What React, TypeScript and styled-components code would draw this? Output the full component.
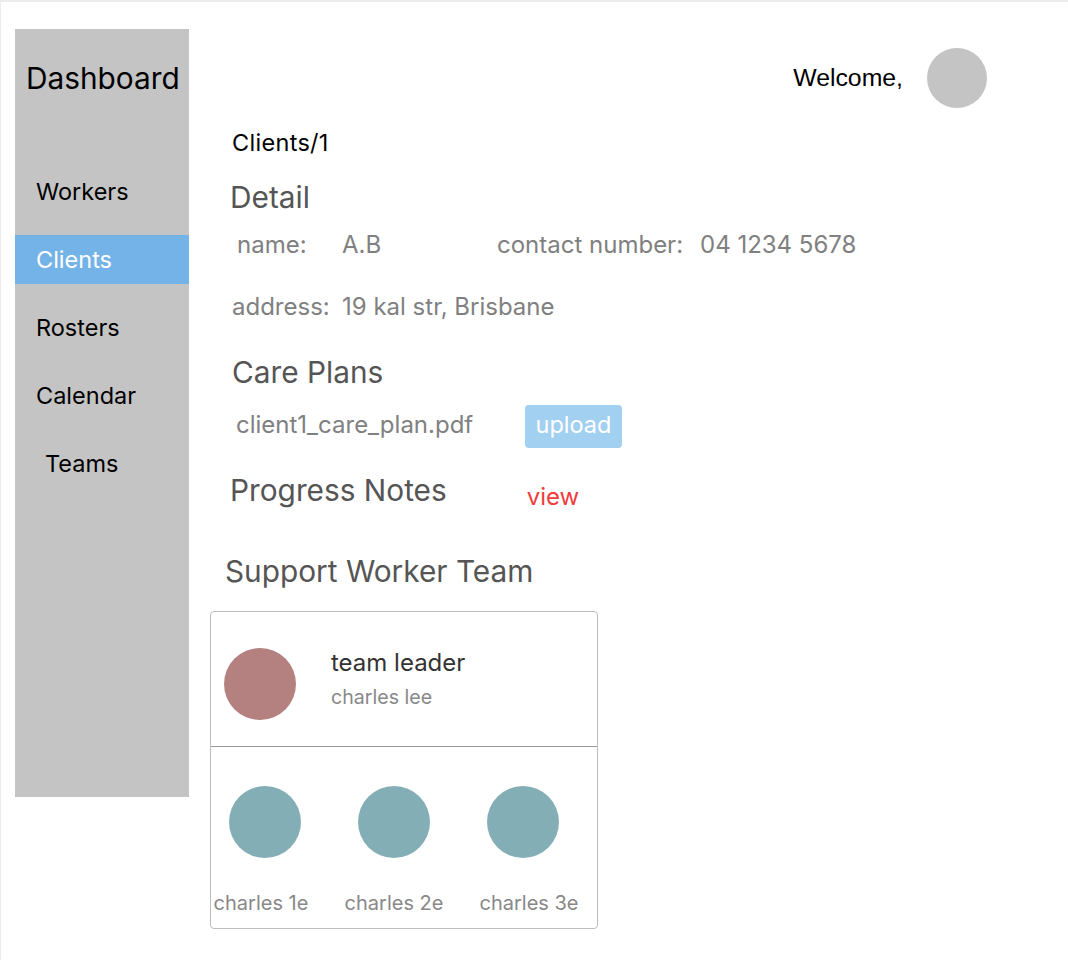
import React from "react";
import styled, { createGlobalStyle } from "styled-components";

const Global = createGlobalStyle`
  html, body { margin: 0; padding: 0; background: #ffffff; }
  body { font-family: Inter, "Noto Sans", sans-serif; }
  * { box-sizing: border-box; }
`;

const Frame = styled.div`
  width: 1068px;
  height: 960px;
  border-top: 2px solid #ececec;
  border-left: 1px solid #ececec;
  display: flex;
  align-items: flex-start;
`;

const Sidebar = styled.nav`
  margin: 27px 0 0 14px;
  width: 174px;
  height: 768px;
  background: #c4c4c4;
  display: flex;
  flex-direction: column;
`;

const Brand = styled.div`
  margin: 30px 0 0 11px;
  font-size: 29.8px;
  line-height: 38px;
  color: #000;
  white-space: nowrap;
`;

const NavList = styled.div`
  margin-top: 70px;
  display: flex;
  flex-direction: column;
  gap: 19px;
`;

const NavItem = styled.div<{ $active?: boolean; $indent?: number }>`
  height: 49px;
  display: flex;
  align-items: center;
  padding-left: ${(p) => p.$indent ?? 21}px;
  font-size: 23.5px;
  color: ${(p) => (p.$active ? "#ffffff" : "#000000")};
  background: ${(p) => (p.$active ? "#74b3e7" : "transparent")};
`;

const Main = styled.main`
  flex: 1;
  display: flex;
  flex-direction: column;
`;

const Header = styled.header`
  margin-top: 46px;
  height: 60px;
  display: flex;
  align-items: center;
  justify-content: flex-end;
  padding-right: 81px;
  gap: 24px;
`;

const Welcome = styled.span`
  font-family: "Liberation Sans", Arial, sans-serif;
  font-size: 24.8px;
  color: #000;
`;

const Avatar = styled.div`
  width: 60px;
  height: 60px;
  border-radius: 50%;
  background: #c4c4c4;
`;

const Crumb = styled.div`
  margin: 20px 0 0 43px;
  font-size: 23.5px;
  letter-spacing: 0.3px;
  line-height: 30px;
  color: #000;
`;

const Heading = styled.h2<{ $mt: number; $ml: number }>`
  margin: ${(p) => p.$mt}px 0 0 ${(p) => p.$ml}px;
  font-size: 29.8px;
  font-weight: 400;
  line-height: 34px;
  color: #555555;
  white-space: nowrap;
`;

const InfoRow = styled.div<{ $mt: number; $ml: number }>`
  margin: ${(p) => p.$mt}px 0 0 ${(p) => p.$ml}px;
  display: flex;
  align-items: center;
  height: 30px;
  font-size: 24px;
  color: #808080;
  white-space: nowrap;
`;

const Cell = styled.span<{ $w?: number }>`
  display: inline-block;
  width: ${(p) => (p.$w ? `${p.$w}px` : "auto")};
`;

const FileRow = styled.div`
  margin: 16px 0 0 47px;
  height: 43px;
  display: flex;
  align-items: center;
`;

const FileName = styled.span`
  width: 289px;
  font-size: 24px;
  color: #808080;
  margin-top: -4px;
  white-space: nowrap;
`;

const UploadButton = styled.button`
  width: 97px;
  height: 43px;
  border: none;
  border-radius: 4px;
  background: #a2d0f1;
  color: #ffffff;
  font-family: Inter, sans-serif;
  font-size: 23.5px;
  padding: 0 0 4px;
  cursor: pointer;
`;

const NotesRow = styled.div`
  display: flex;
  align-items: flex-start;
`;

const ViewLink = styled.a`
  margin: 39px 0 0 80px;
  font-size: 24px;
  line-height: 20px;
  color: #ef3b3b;
  text-decoration: none;
`;

const Card = styled.section`
  margin: 23px 0 0 21px;
  width: 388px;
  height: 318px;
  border: 1px solid #bdbdbd;
  border-radius: 4px;
  display: flex;
  flex-direction: column;
`;

const LeaderRow = styled.div`
  height: 135px;
  display: flex;
  align-items: flex-start;
  padding: 36px 0 0 13px;
  border-bottom: 1px solid #9a9a9a;
`;

const Circle = styled.div<{ $color: string }>`
  width: 72px;
  height: 72px;
  border-radius: 50%;
  background: ${(p) => p.$color};
  flex: none;
`;

const LeaderText = styled.div`
  margin: 0 0 0 35px;
  display: flex;
  flex-direction: column;
`;

const Role = styled.span`
  margin-top: 0;
  font-size: 24px;
  line-height: 30px;
  color: #333333;
  white-space: nowrap;
`;

const Person = styled.span`
  margin-top: 6px;
  font-size: 19.6px;
  line-height: 26px;
  color: #888888;
  white-space: nowrap;
`;

const Members = styled.div`
  display: flex;
  padding: 39px 0 0 18px;
  gap: 57px;
`;

const Member = styled.div`
  width: 72px;
  display: flex;
  flex-direction: column;
  align-items: center;
`;

const MemberName = styled.span<{ $shift: number }>`
  margin: 32px 0 0 ${(p) => p.$shift * 2}px;
  font-size: 20px;
  line-height: 26px;
  color: #888888;
  white-space: nowrap;
`;

export default function App() {
  const members = [
    { name: "charles 1e", shift: -4 },
    { name: "charles 2e", shift: 0 },
    { name: "charles 3e", shift: 6 },
  ];
  return (
    <>
      <Global />
      <Frame>
        <Sidebar>
          <Brand>Dashboard</Brand>
          <NavList>
            <NavItem>Workers</NavItem>
            <NavItem $active>Clients</NavItem>
            <NavItem>Rosters</NavItem>
            <NavItem>Calendar</NavItem>
            <NavItem $indent={30}>Teams</NavItem>
          </NavList>
        </Sidebar>
        <Main>
          <Header>
            <Welcome>Welcome,</Welcome>
            <Avatar />
          </Header>
          <Crumb>Clients/1</Crumb>
          <Heading $mt={22} $ml={41}>Detail</Heading>
          <InfoRow $mt={15} $ml={48}>
            <Cell $w={105}>name:</Cell>
            <Cell $w={155}>A.B</Cell>
            <Cell $w={203}>contact number:</Cell>
            <Cell>04 1234 5678</Cell>
          </InfoRow>
          <InfoRow $mt={32} $ml={43}>
            <Cell $w={110}>address:</Cell>
            <Cell>19 kal str, Brisbane</Cell>
          </InfoRow>
          <Heading $mt={34} $ml={43}>Care Plans</Heading>
          <FileRow>
            <FileName>client1_care_plan.pdf</FileName>
            <UploadButton>upload</UploadButton>
          </FileRow>
          <NotesRow>
            <Heading $mt={25} $ml={41}>Progress Notes</Heading>
            <ViewLink href="#">view</ViewLink>
          </NotesRow>
          <Heading $mt={47} $ml={36}>Support Worker Team</Heading>
          <Card>
            <LeaderRow>
              <Circle $color="#b48080" />
              <LeaderText>
                <Role>team leader</Role>
                <Person>charles lee</Person>
              </LeaderText>
            </LeaderRow>
            <Members>
              {members.map((m) => (
                <Member key={m.name}>
                  <Circle $color="#84aeb6" />
                  <MemberName $shift={m.shift}>{m.name}</MemberName>
                </Member>
              ))}
            </Members>
          </Card>
        </Main>
      </Frame>
    </>
  );
}
